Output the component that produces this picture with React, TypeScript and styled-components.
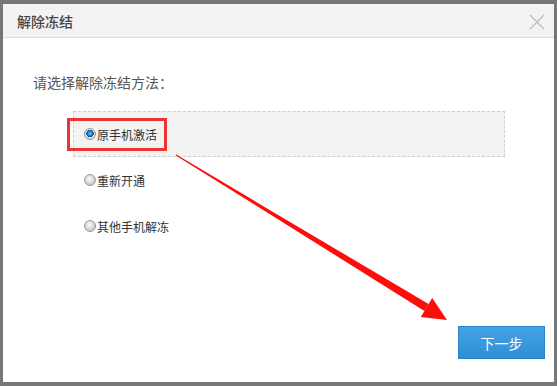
import styled, { createGlobalStyle } from "styled-components";

const GlobalStyle = createGlobalStyle`
  html, body {
    margin: 0;
    padding: 0;
    background: #777;
  }
  body {
    font-family: "Noto Sans CJK SC", "Liberation Sans", sans-serif;
  }
`;

const options = [
  { label: "原手机激活", checked: true },
  { label: "重新开通", checked: false },
  { label: "其他手机解冻", checked: false },
];

export default function App() {
  return (
    <>
      <GlobalStyle />
      <StyledFrame>
        <StyledDialog>
          <StyledHeader>
            <StyledTitle>解除冻结</StyledTitle>
            <StyledClose aria-label="close">
              <svg width="16" height="16" viewBox="0 0 16 16">
                <path d="M1 1 L15 15 M15 1 L1 15" stroke="#bdbdbd" strokeWidth="1.4" fill="none" />
              </svg>
            </StyledClose>
          </StyledHeader>
          <StyledBody>
            <StyledQuestion>请选择解除冻结方法：</StyledQuestion>
            <StyledOptions>
              {options.map((o) => (
                <StyledOption key={o.label} selected={o.checked}>
                  <StyledRadio checked={o.checked} />
                  <StyledLabel>{o.label}</StyledLabel>
                </StyledOption>
              ))}
            </StyledOptions>
            <StyledFooter>
              <StyledButton>下一步</StyledButton>
            </StyledFooter>
          </StyledBody>
          <StyledHighlight />
          <StyledArrow width="557" height="386" viewBox="0 0 557 386">
            <polygon
              points="175.7,155.4 176.3,154.6 428.6,304.1 424.4,310.9"
              fill="#ff0d0d"
            />
            <polygon points="447,320 420.8,316.9 432.2,298.1" fill="#ff0d0d" />
          </StyledArrow>
        </StyledDialog>
      </StyledFrame>
    </>
  );
}

const StyledFrame = styled.div`
  width: 557px;
  height: 386px;
  box-sizing: border-box;
  padding: 4px 3px 4px 3px;
  background: #777;
`;

const StyledDialog = styled.div`
  position: relative;
  height: 100%;
  display: flex;
  flex-direction: column;
  background: #fff;
`;

const StyledHeader = styled.div`
  height: 33px;
  display: flex;
  align-items: center;
  justify-content: space-between;
  padding: 0 9px 0 14px;
  background: #f3f3f3;
  border-bottom: 1px solid #dcdcdc;
`;

const StyledTitle = styled.span`
  font-size: 14px;
  color: #444;
  font-weight: 500;
`;

const StyledClose = styled.span`
  display: flex;
  width: 16px;
  height: 16px;
  margin-top: 2px;
`;

const StyledBody = styled.div`
  flex: 1;
  display: flex;
  flex-direction: column;
  padding: 34px 0 0 30px;
`;

const StyledQuestion = styled.div`
  font-size: 14px;
  line-height: 20px;
  color: #555;
`;

const StyledOptions = styled.div`
  display: flex;
  flex-direction: column;
  margin: 19px 0 0 40px;
  width: 432px;
`;

const StyledOption = styled.div<{ selected: boolean }>`
  height: 44px;
  display: flex;
  align-items: center;
  padding-left: 10px;
  border: 1px dashed ${({ selected }) => (selected ? "#cfcfcf" : "transparent")};
  background: ${({ selected }) => (selected ? "#f3f3f3" : "transparent")};
`;

const StyledRadio = styled.span<{ checked: boolean }>`
  width: 12px;
  height: 12px;
  box-sizing: border-box;
  border-radius: 50%;
  border: 1px solid #9a9a9a;
  background: ${({ checked }) =>
    checked
      ? "radial-gradient(circle at 50% 45%, #6fc3f2 0, #1b78c4 2.5px, #0d4f8c 3.5px, #e8e8e8 4px, #d2d2d2 6px)"
      : "radial-gradient(circle at 45% 40%, #fafafa 0, #e2e2e2 3px, #c4c4c4 6px)"};
`;

const StyledLabel = styled.span`
  margin-left: 1px;
  font-size: 12px;
  color: #333;
`;

const StyledFooter = styled.div`
  margin-top: auto;
  display: flex;
  justify-content: flex-end;
  padding: 0 9px 23px 0;
`;

const StyledButton = styled.button`
  width: 87px;
  height: 33px;
  border: 1px solid #2984cb;
  background: linear-gradient(#44a3e2, #2f8fd6);
  color: #fff;
  font-family: inherit;
  font-size: 14px;
  padding: 0;
  cursor: pointer;
`;

const StyledHighlight = styled.div`
  position: absolute;
  left: 64px;
  top: 114px;
  width: 100px;
  height: 33px;
  box-sizing: border-box;
  border: 3px solid #ee3333;
`;

const StyledArrow = styled.svg`
  position: absolute;
  left: -3px;
  top: -4px;
  pointer-events: none;
`;
